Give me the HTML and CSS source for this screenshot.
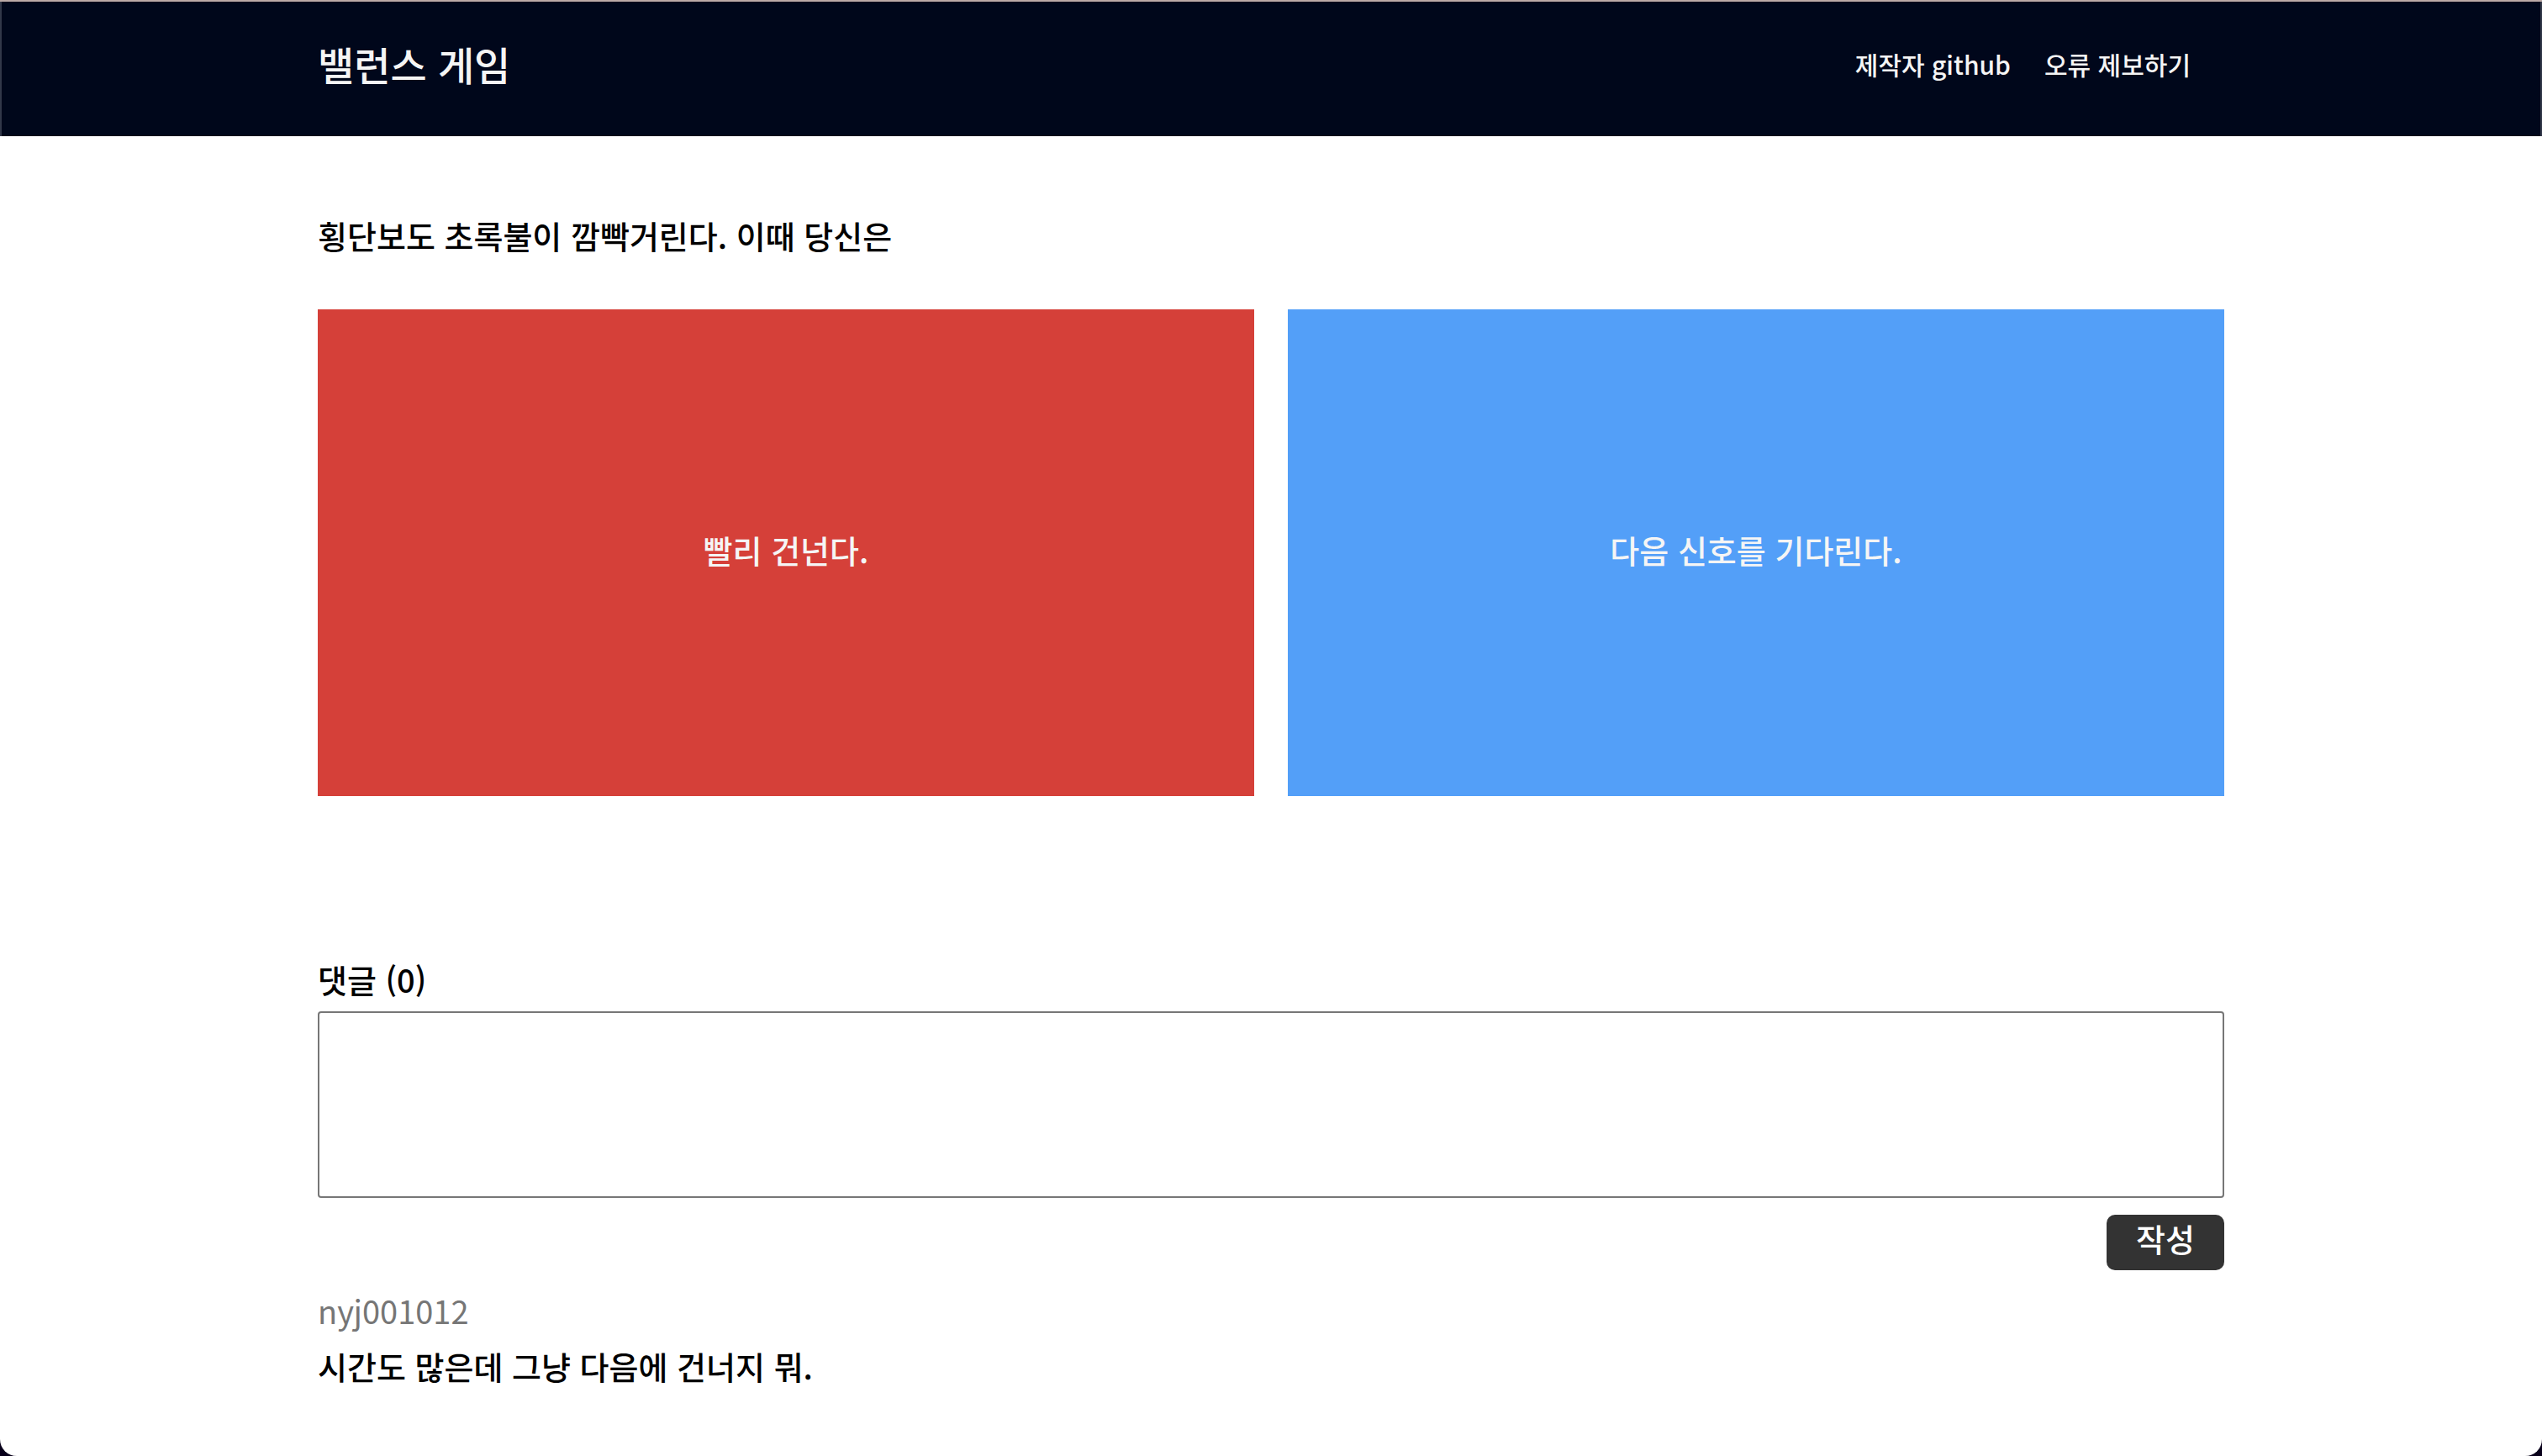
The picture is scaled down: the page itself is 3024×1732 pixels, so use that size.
FILE: index.html
```html
<!DOCTYPE html>
<html lang="ko">
<head>
  <meta charset="utf-8">
  <meta name="viewport" content="width=device-width, initial-scale=1">
  <title>밸런스 게임</title>
  <link rel="stylesheet" href="styles.css">
</head>
<body>
  <header class="header">
    <div class="container header-inner">
      <h1 class="title">밸런스 게임</h1>
      <nav class="nav">
        <a href="#github">제작자 github</a>
        <a href="#report">오류 제보하기</a>
      </nav>
    </div>
  </header>
  <main class="container">
    <h2 class="question">횡단보도 초록불이 깜빡거린다. 이때 당신은</h2>
    <div class="choices">
      <button type="button" class="choice choice-red">빨리 건넌다.</button>
      <button type="button" class="choice choice-blue">다음 신호를 기다린다.</button>
    </div>
    <form class="comment-form">
      <label for="comment">댓글 (0)</label>
      <textarea id="comment" class="comment-input"></textarea>
      <button type="button" class="submit">작성</button>
    </form>
    <article class="comment">
      <p class="author">nyj001012</p>
      <p class="text">시간도 많은데 그냥 다음에 건너지 뭐.</p>
    </article>
  </main>
</body>
</html>
```
FILE: styles.css
```css
* {
  box-sizing: border-box;
}

html {
  background: #08001a;
}

body {
  min-height: 100vh;
  margin: 0;
  background: #fff;
  border-radius: 0 0 20px 20px;
  color: #000;
  font-family: "Noto Sans CJK KR", sans-serif;
  font-size: 38px;
  font-weight: 500;
  line-height: 56px;
}

h1,
h2,
p {
  margin: 0;
  font-weight: inherit;
}

button,
textarea {
  font: inherit;
}

.container {
  width: 75%;
  margin: 0 auto;
}

.header {
  background: #00071b;
  border-top: 2px solid #bba9a6;
  box-shadow: inset 2px 0 #323849, inset -2px 0 #323849;
  color: #f5f5f5;
}

.header-inner {
  display: flex;
  align-items: center;
  justify-content: space-between;
  padding: 38px 0 50px;
}

.title {
  font-size: 47px;
  line-height: 72px;
}

.nav {
  display: flex;
  gap: 40px;
  padding-right: 40px;
  font-size: 30px;
}

.nav a {
  color: inherit;
  text-decoration: none;
}

.question {
  padding: 90px 0 60px;
  font-size: 38px;
}

.choices {
  display: grid;
  grid-template-columns: 1fr 1fr;
  gap: 40px;
}

.choice {
  min-height: 579px;
  padding: 0 20px 8px;
  border: 0;
  color: #f5f5f5;
}

.choice-red {
  background: #d54039;
}

.choice-blue {
  background: #539ff8;
}

.comment-form {
  display: flex;
  flex-direction: column;
  margin-top: 190px;
}

.comment-input {
  height: 222px;
  margin: 10px 0 20px;
  border: 2px solid #767676;
  border-radius: 4px;
  background: #fff;
  resize: none;
}

.submit {
  align-self: flex-end;
  width: 140px;
  padding: 0 0 10px;
  border: 0;
  border-radius: 10px;
  background: #333;
  color: #fff;
}

.comment {
  display: grid;
  gap: 10px;
  padding: 20px 0;
}

.author {
  color: #767676;
  font-weight: 400;
}
```
